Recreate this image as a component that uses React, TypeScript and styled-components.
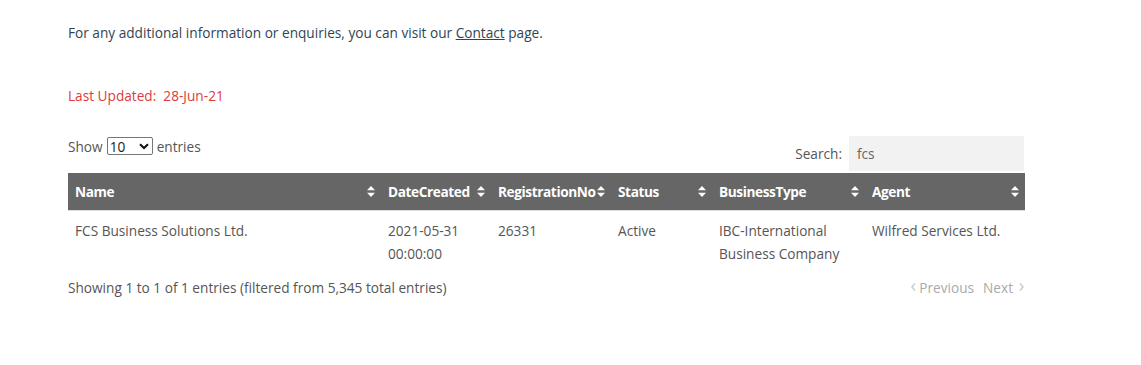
import React from "react";
import styled, { createGlobalStyle } from "styled-components";

const Global = createGlobalStyle`
  html, body { margin: 0; padding: 0; background: #fff; }
  body { font-family: "Open Sans", "Liberation Sans", sans-serif; font-size: 13.65px; color: #555; }
`;

const Page = styled.div`
  padding: 22px 0 0 68px;
  width: 957px;
`;

const Intro = styled.p`
  margin: 0;
  line-height: 22px;
  color: #2f4553;
  a { color: #2f4553; text-decoration: underline; }
`;

const Updated = styled.p`
  margin: 41px 0 0;
  line-height: 22px;
  color: #e03b3b;
`;

const Controls = styled.div`
  display: flex;
  justify-content: space-between;
  align-items: flex-start;
  margin-top: 28px;
`;

const Length = styled.label`
  display: flex;
  align-items: center;
  gap: 4px;
  color: #555;
  margin-top: 1px;
  height: 20px;
`;

const Select = styled.span`
  display: inline-flex;
  align-items: center;
  justify-content: space-between;
  height: 18px;
  border: 1px solid #767676;
  border-radius: 2px;
  padding: 0 3px 0 2px;
  box-sizing: border-box;
  width: 46px;
  color: #222;
`;

const SearchBox = styled.label`
  display: flex;
  align-items: center;
  gap: 7px;
  color: #555;
  margin-right: 1px;
`;

const SearchInput = styled.span`
  display: flex;
  align-items: center;
  width: 175px;
  height: 35px;
  padding-left: 8px;
  box-sizing: border-box;
  background: #f2f2f2;
  color: #666;
  margin-top: 1px;
`;

const Table = styled.table`
  width: 957px;
  border-collapse: collapse;
  table-layout: fixed;
  margin-top: 2px;
`;

const Th = styled.th<{ $w: number }>`
  width: ${(p) => p.$w}px;
  background: #666;
  color: #fff;
  text-align: left;
  font-weight: 700;
  letter-spacing: -0.4px;
  height: 37px;
  padding: 0 18px 0 7px;
  box-sizing: border-box;
  position: relative;
  border-bottom: 1px solid #ddd;
  white-space: nowrap;
`;

const SortIcon = styled.svg`
  position: absolute;
  right: 6px;
  top: 13px;
`;

const Td = styled.td`
  vertical-align: top;
  padding: 8px 10px 12px 7px;
  line-height: 23px;
  color: #555;
`;

const Footer = styled.div`
  display: flex;
  justify-content: space-between;
  align-items: center;
  margin-top: 1px;
  color: #555;
`;

const Pager = styled.div`
  display: flex;
  gap: 9px;
  color: #aaa;
  margin-right: 0;
`;

const PageBtn = styled.span<{ $gap: number }>`
  display: inline-flex;
  align-items: center;
  gap: ${(p) => p.$gap}px;
`;

const Sort = () => (
  <SortIcon width="8" height="11" viewBox="0 0 8 11">
    <path d="M4 0 L8 4.3 L0 4.3 Z M0 6.7 L8 6.7 L4 11 Z" fill="#fff" />
  </SortIcon>
);

const Chevron = ({ dir }: { dir: "l" | "r" }) => (
  <svg width="7" height="10" viewBox="0 0 7 10">
    <path
      d={dir === "l" ? "M5 1.5 L2 5 L5 8.5" : "M2 1.5 L5 5 L2 8.5"}
      stroke="#ccc"
      strokeWidth="1.5"
      fill="none"
    />
  </svg>
);

const cols: [string, number][] = [
  ["Name", 313],
  ["DateCreated", 110],
  ["RegistrationNo", 120],
  ["Status", 101],
  ["BusinessType", 153],
  ["Agent", 160],
];

export default function App() {
  return (
    <>
      <Global />
      <Page>
        <Intro>
          For any additional information or enquiries, you can visit our <a href="#">Contact</a> page.
        </Intro>
        <Updated>Last Updated:&nbsp; 28-Jun-21</Updated>
        <Controls>
          <Length>
            Show
            <Select>
              10
              <svg width="10" height="7" viewBox="0 0 10 7">
                <path d="M1 1.2 L5 5 L9 1.2" stroke="#111" strokeWidth="2" fill="none" />
              </svg>
            </Select>
            entries
          </Length>
          <SearchBox>
            Search:
            <SearchInput>fcs</SearchInput>
          </SearchBox>
        </Controls>
        <Table>
          <thead>
            <tr>
              {cols.map(([c, w]) => (
                <Th key={c} $w={w}>
                  {c}
                  <Sort />
                </Th>
              ))}
            </tr>
          </thead>
          <tbody>
            <tr>
              <Td>FCS Business Solutions Ltd.</Td>
              <Td>2021-05-31 00:00:00</Td>
              <Td>26331</Td>
              <Td>Active</Td>
              <Td>IBC-International Business Company</Td>
              <Td>Wilfred Services Ltd.</Td>
            </tr>
          </tbody>
        </Table>
        <Footer>
          <span>Showing 1 to 1 of 1 entries (filtered from 5,345 total entries)</span>
          <Pager>
            <PageBtn $gap={2}>
              <Chevron dir="l" />
              Previous
            </PageBtn>
            <PageBtn $gap={5}>
              Next
              <Chevron dir="r" />
            </PageBtn>
          </Pager>
        </Footer>
      </Page>
    </>
  );
}
